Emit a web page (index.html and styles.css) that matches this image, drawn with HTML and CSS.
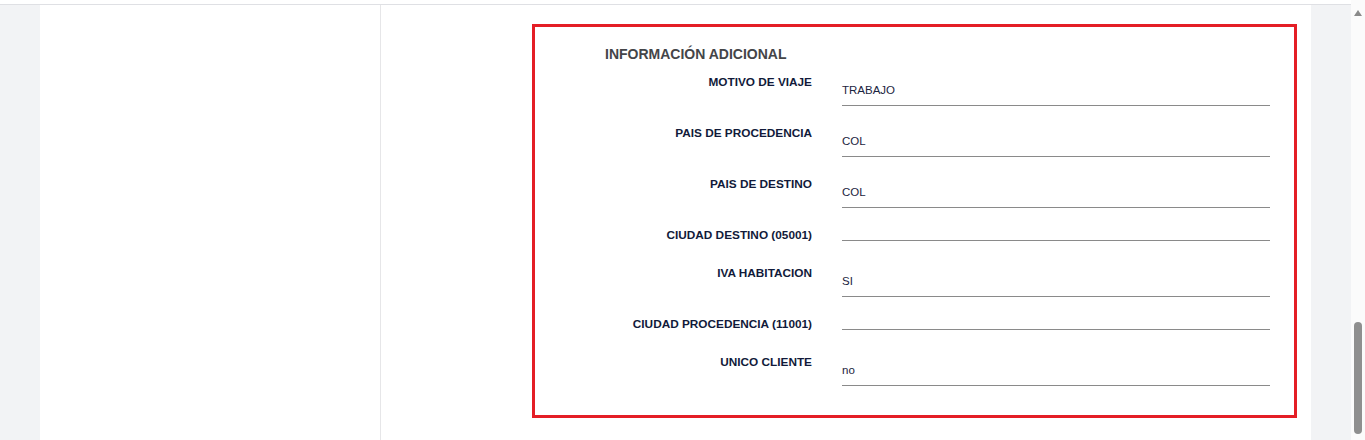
FILE: index.html
```html
<!DOCTYPE html>
<html lang="es">
<head>
<meta charset="utf-8">
<title>Información adicional</title>
<link rel="stylesheet" href="styles.css">
</head>
<body>
<div class="page">
  <div class="view">
    <div class="topbar"></div>
    <div class="main">
      <div class="gutter"></div>
      <div class="content">
        <aside class="sidebar"></aside>
        <div class="panel">
          <section class="box">
            <h2 class="box-title">INFORMACIÓN ADICIONAL</h2>
            <div class="row">
              <div class="label">MOTIVO DE VIAJE</div>
              <div class="field">TRABAJO</div>
            </div>
            <div class="row">
              <div class="label">PAIS DE PROCEDENCIA</div>
              <div class="field">COL</div>
            </div>
            <div class="row">
              <div class="label">PAIS DE DESTINO</div>
              <div class="field">COL</div>
            </div>
            <div class="row">
              <div class="label">CIUDAD DESTINO (05001)</div>
              <div class="field empty"></div>
            </div>
            <div class="row">
              <div class="label">IVA HABITACION</div>
              <div class="field">SI</div>
            </div>
            <div class="row">
              <div class="label">CIUDAD PROCEDENCIA (11001)</div>
              <div class="field empty"></div>
            </div>
            <div class="row">
              <div class="label">UNICO CLIENTE</div>
              <div class="field">no</div>
            </div>
          </section>
        </div>
      </div>
      <div class="gutter"></div>
    </div>
  </div>
  <div class="scrollbar">
    <div class="arrow-up"></div>
    <div class="thumb"></div>
  </div>
</div>
</body>
</html>
```

FILE: styles.css
```css
html, body {
  margin: 0;
  padding: 0;
  height: 440px;
  overflow: hidden;
  background: #ffffff;
  font-family: "Liberation Sans", Arial, sans-serif;
}

.page {
  display: flex;
  height: 440px;
}

.view {
  flex: 1;
  display: flex;
  flex-direction: column;
}

.topbar {
  height: 4px;
  background: #ffffff;
  border-bottom: 1px solid #dfe0e4;
}

.main {
  flex: 1;
  display: flex;
}

.gutter {
  width: 40px;
  background: #f2f3f5;
}

.content {
  flex: 1;
  display: flex;
  background: #ffffff;
}

.sidebar {
  width: 341px;
  box-sizing: border-box;
  border-right: 1px solid #e6e6e8;
}

.panel {
  flex: 1;
  padding-top: 19px;
  padding-left: 151px;
}

.box {
  width: 765px;
  box-sizing: border-box;
  border: 3px solid #e41e26;
  padding: 17px 24px 13px 0;
}

.box-title {
  margin: 0 0 7px 70px;
  font-size: 14px;
  line-height: 20px;
  font-weight: 700;
  color: #444548;
}

.row {
  display: grid;
  grid-template-columns: 277px 428px;
  column-gap: 30px;
  align-items: start;
  margin-bottom: 16px;
}

.label {
  height: 22px;
  box-sizing: border-box;
  padding-top: 4px;
  text-align: right;
  font-size: 11.8px;
  line-height: 14px;
  font-weight: 700;
  color: #111a3a;
}

.field {
  height: 35px;
  box-sizing: border-box;
  padding: 10px 0 0 0;
  font-size: 11.5px;
  line-height: 18px;
  color: #1b2440;
  border-bottom: 1px solid #8a8a8a;
}

.field.empty {
  height: 17px;
}

.scrollbar {
  width: 14px;
  background: #fbfbfb;
  position: relative;
}

.arrow-up {
  position: absolute;
  top: 10px;
  left: 3px;
  width: 0;
  height: 0;
  border-left: 4px solid transparent;
  border-right: 4px solid transparent;
  border-bottom: 6px solid #8a8a8a;
}

.thumb {
  position: absolute;
  top: 322px;
  left: 3px;
  width: 8px;
  height: 112px;
  border-radius: 4px;
  background: #8f8f8f;
}
```
